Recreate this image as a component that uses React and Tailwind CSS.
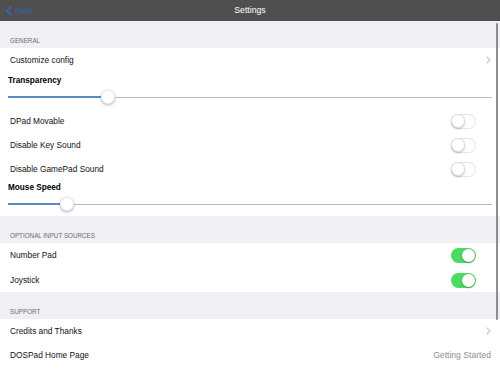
const font = { fontFamily: '"Liberation Sans", Arial, sans-serif' };

function Chevron() {
  return (
    <svg width="5" height="8" viewBox="0 0 5 8" className="shrink-0">
      <path d="M1 1l3 3-3 3" fill="none" stroke="#c7c7cc" strokeWidth="1.1" strokeLinecap="round" strokeLinejoin="round" />
    </svg>
  );
}

function Toggle({ on }) {
  return on ? (
    <div className="w-[25px] h-[15px] rounded-full bg-[#4cd964] flex items-center justify-end p-[1px]">
      <div className="w-[13px] h-[13px] rounded-full bg-white shadow-[0_1px_2px_rgba(0,0,0,0.3)]" />
    </div>
  ) : (
    <div className="w-[25px] h-[15px] rounded-full bg-white border border-[#e3e3e8] flex items-center">
      <div className="w-[14px] h-[14px] -ml-[1px] rounded-full bg-white border border-[#e0e0e0] shadow-[0_1px_2px_rgba(0,0,0,0.25)]" />
    </div>
  );
}

function Slider({ fill, className }) {
  return (
    <div className={`flex items-center pl-[8px] pr-[8px] ${className}`}>
      <div className="h-[1.5px] bg-[#5a8cc8]" style={{ width: fill }} />
      <div className="w-[14px] h-[14px] rounded-full bg-white shadow-[0_1px_3px_rgba(0,0,0,0.3)] border border-[#ececec] shrink-0" />
      <div className="h-[1px] flex-1 bg-[#b8b8b8]" />
    </div>
  );
}

function SectionHeader({ title }) {
  return (
    <div className="h-[27px] bg-[#efeff4] flex items-end pl-[10px] pb-[4px]">
      <span className="text-[6.3px] text-[#6d6d72] uppercase leading-none">{title}</span>
    </div>
  );
}

function Row({ label, children }) {
  return (
    <div className="h-[24px] flex items-center justify-between pl-[10px] pr-[9px]">
      <span className="text-[8.3px] text-[#111]">{label}</span>
      {children}
    </div>
  );
}

function ToggleRow({ label, on }) {
  return (
    <div className="h-[24px] flex items-center justify-between pl-[10px] pr-[24px]">
      <span className="text-[8.3px] text-[#111]">{label}</span>
      <Toggle on={on} />
    </div>
  );
}

export default function App() {
  return (
    <div className="w-[500px] h-[375px] bg-white relative overflow-hidden" style={font}>
      <div className="h-[21px] bg-[#4f4f4f] relative flex items-center justify-center">
        <div className="absolute left-[6px] top-0 h-full flex items-center gap-[3px]">
          <svg width="6" height="10" viewBox="0 0 6 10">
            <path d="M5 1L1 5l4 4" fill="none" stroke="#3567c7" strokeWidth="1.6" strokeLinecap="round" strokeLinejoin="round" />
          </svg>
          <span className="text-[8px] text-[#3262c0]">Back</span>
        </div>
        <span className="text-[8.7px] text-white">Settings</span>
      </div>

      <SectionHeader title="General" />
      <Row label="Customize config">
        <Chevron />
      </Row>
      <div className="h-[18px] flex items-center pl-[8px]">
        <span className="text-[8.2px] font-bold text-black">Transparency</span>
      </div>
      <Slider fill="93px" className="h-[14px] mb-[5px]" />
      <ToggleRow label="DPad Movable" />
      <ToggleRow label="Disable Key Sound" />
      <ToggleRow label="Disable GamePad Sound" />
      <div className="h-[14px] flex items-center pl-[8px]">
        <span className="text-[8.2px] font-bold text-black">Mouse Speed</span>
      </div>
      <Slider fill="52px" className="h-[18px] mb-[3px]" />

      <SectionHeader title="Optional Input Sources" />
      <div className="h-[25px] flex items-center justify-between pl-[10px] pr-[24px]">
        <span className="text-[8.3px] text-[#111]">Number Pad</span>
        <Toggle on />
      </div>
      <ToggleRow label="Joystick" on />

      <SectionHeader title="Support" />
      <Row label="Credits and Thanks">
        <Chevron />
      </Row>
      <Row label="DOSPad Home Page">
        <span className="text-[8.6px] text-[#8e8e93]">Getting Started</span>
      </Row>

      <div className="absolute right-[2px] top-[23px] w-[2.5px] h-[297px] rounded-full bg-[#8f8f8f]" />
    </div>
  );
}
